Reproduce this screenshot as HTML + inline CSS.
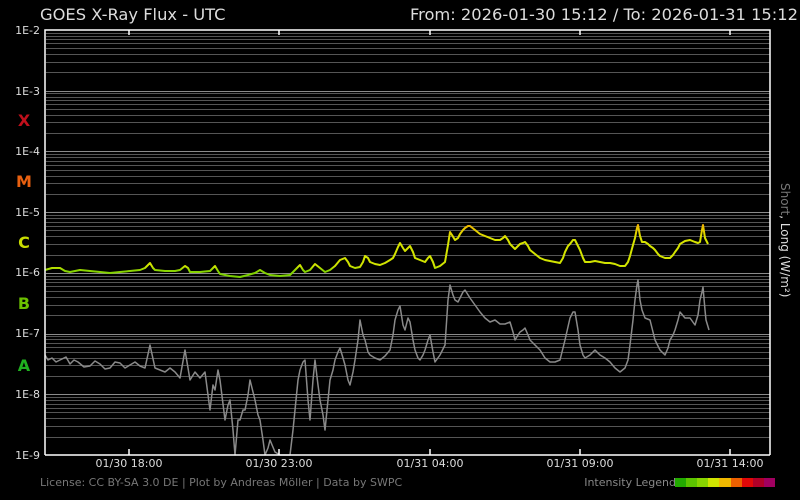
<!DOCTYPE html>
<html><head><meta charset="utf-8"><style>
html,body{margin:0;padding:0;background:#000;}
svg{display:block;font-family:"DejaVu Sans","Liberation Sans",sans-serif;}
</style></head><body>
<svg width="800" height="500" viewBox="0 0 800 500" xmlns="http://www.w3.org/2000/svg">
<rect width="800" height="500" fill="#000"/>
<defs>
<linearGradient id="lg" gradientUnits="userSpaceOnUse" x1="0" y1="222" x2="0" y2="280">
<stop offset="0" stop-color="#f0a000"/>
<stop offset="0.12" stop-color="#e8c800"/>
<stop offset="0.3" stop-color="#d8e400"/>
<stop offset="0.76" stop-color="#d0e400"/>
<stop offset="0.84" stop-color="#88d400"/>
<stop offset="1" stop-color="#70cc00"/>
</linearGradient>
</defs>
<path stroke="#555" stroke-width="1" fill="none" d="M46 33.5H770M46 36.5H770M46 39.5H770M46 43.5H770M46 48.5H770M46 54.5H770M46 62.5H770M46 72.5H770
M46 93.5H770M46 97.5H770M46 100.5H770M46 104.5H770M46 109.5H770M46 115.5H770M46 122.5H770M46 133.5H770
M46 154.5H770M46 157.5H770M46 161.5H770M46 165.5H770M46 170.5H770M46 176.5H770M46 183.5H770M46 194.5H770
M46 215.5H770M46 218.5H770M46 222.5H770M46 226.5H770M46 230.5H770M46 236.5H770M46 244.5H770M46 255.5H770
M46 276.5H770M46 279.5H770M46 282.5H770M46 286.5H770M46 291.5H770M46 297.5H770M46 305.5H770M46 315.5H770
M46 336.5H770M46 339.5H770M46 343.5H770M46 347.5H770M46 352.5H770M46 358.5H770M46 365.5H770M46 376.5H770
M46 397.5H770M46 400.5H770M46 404.5H770M46 408.5H770M46 412.5H770M46 418.5H770M46 426.5H770M46 437.5H770"/>
<path stroke="#8a8a8a" stroke-width="1" fill="none" d="M46 91.5H770M46 151.5H770M46 212.5H770M46 273.5H770M46 334.5H770M46 394.5H770"/>
<text x="40" y="20" fill="#ddd" font-size="16.3">GOES X-Ray Flux - UTC</text>
<text x="798" y="20" fill="#ddd" font-size="16.3" text-anchor="end">From: 2026-01-30 15:12  /  To: 2026-01-31 15:12</text>
<g fill="#ddd" font-size="11" text-anchor="end">
<text x="40" y="34">1E-2</text><text x="40" y="95">1E-3</text><text x="40" y="155">1E-4</text><text x="40" y="216">1E-5</text><text x="40" y="276">1E-6</text><text x="40" y="337">1E-7</text><text x="40" y="398">1E-8</text><text x="40" y="459">1E-9</text>
</g>
<g font-size="16" font-weight="bold" text-anchor="middle">
<text x="24" y="126" fill="#c0101c">X</text>
<text x="24" y="187" fill="#e86010">M</text>
<text x="24" y="248" fill="#c8dc00">C</text>
<text x="24" y="309" fill="#6cc000">B</text>
<text x="24" y="371" fill="#20b020">A</text>
</g>
<g fill="#ddd" font-size="11" text-anchor="middle">
<text x="129" y="467">01/30 18:00</text><text x="279" y="467">01/30 23:00</text><text x="430" y="467">01/31 04:00</text><text x="580" y="467">01/31 09:00</text><text x="730" y="467">01/31 14:00</text>
</g>
<text transform="translate(781,183) rotate(90)" font-size="12" fill="#ddd"><tspan fill="#777">Short</tspan>, Long (W/m²)</text>
<text x="40" y="486" fill="#777" font-size="11">License: CC BY-SA 3.0 DE | Plot by Andreas Möller | Data by SWPC</text>
<text x="676" y="486" fill="#888" font-size="11" text-anchor="end">Intensity Legend</text>
<g>
<rect x="675" y="478" width="12" height="9" fill="#22aa00"/>
<rect x="686" y="478" width="11" height="9" fill="#5cc400"/>
<rect x="697" y="478" width="11" height="9" fill="#88d400"/>
<rect x="708" y="478" width="11" height="9" fill="#d0e400"/>
<rect x="719" y="478" width="12" height="9" fill="#f0b800"/>
<rect x="731" y="478" width="11" height="9" fill="#ec6000"/>
<rect x="742" y="478" width="11" height="9" fill="#e00808"/>
<rect x="753" y="478" width="11" height="9" fill="#b00028"/>
<rect x="764" y="478" width="11" height="9" fill="#a00060"/>
</g>
<polyline fill="none" stroke="#8a8a8a" stroke-width="1.5" stroke-linejoin="round" points="45,355 48,360 52,358 56,362 60,360 66,357 70,364 74,360 78,362 84,367 90,366 95,361 100,364 105,369 110,368 115,362 120,363 125,368 130,365 135,362 140,366 145,368 150,345 155,368 160,370 165,372 170,368 175,372 180,378 185,350 190,380 195,372 200,378 205,372 208,395 210,410 213,385 215,390 218,370 220,380 225,420 228,405 230,400 233,430 235,455 238,420 240,420 243,410 245,410 248,395 250,380 253,392 255,400 258,415 260,420 263,440 265,455 268,448 270,440 275,452 280,455 285,455 290,455 293,430 295,410 298,380 300,370 303,362 305,360 308,400 310,420 313,380 315,360 318,385 320,400 323,415 325,430 328,400 330,380 333,370 335,360 338,352 340,348 343,358 345,365 348,380 350,385 353,372 355,360 358,340 360,320 363,335 365,340 368,352 370,355 375,358 380,360 385,356 390,350 393,335 395,320 398,310 400,306 403,325 405,330 408,318 410,322 413,340 415,350 418,358 420,360 423,355 425,350 428,340 430,335 433,352 435,362 440,355 445,345 448,300 450,285 453,295 455,300 458,302 460,298 463,292 465,290 470,298 475,305 480,312 485,318 490,322 495,320 500,324 505,324 510,322 513,332 515,340 518,335 520,332 523,330 525,328 528,335 530,340 535,345 540,350 545,358 550,362 555,362 560,360 565,340 570,318 573,312 575,312 578,330 580,345 583,355 585,358 590,355 595,350 600,355 605,358 610,362 615,368 620,372 625,368 628,360 630,345 633,320 635,300 637,285 638,280 640,300 642,310 645,318 650,320 653,332 655,340 660,350 665,355 668,348 670,340 673,335 675,330 678,320 680,312 685,318 690,318 695,325 698,315 700,300 702,292 703,287 705,310 706,320 709,330"/>
<polyline fill="none" stroke="url(#lg)" stroke-width="2" stroke-linejoin="round" points="45,270 52,268 60,268 65,271 70,272 80,270 90,271 100,272 110,273 120,272 130,271 140,270 145,268 148,265 150,263 153,268 155,270 165,271 175,271 180,270 185,266 188,268 190,272 200,272 210,271 213,268 215,266 218,271 220,274 230,276 240,277 248,275 255,273 260,270 265,273 270,275 280,276 290,275 293,272 295,270 298,267 300,265 303,270 305,272 310,270 315,264 320,268 325,272 330,270 335,266 340,260 345,258 348,262 350,266 355,268 360,267 363,262 365,256 368,258 370,262 375,264 380,265 385,263 390,260 393,258 395,254 398,247 400,243 403,248 405,251 408,248 410,246 413,252 415,258 420,260 425,262 428,258 430,256 433,262 435,268 440,266 445,262 448,245 450,232 452,235 455,240 458,238 460,234 463,230 465,228 468,226 470,226 475,230 480,234 485,236 490,238 495,240 500,240 503,238 505,236 508,240 510,244 513,247 515,249 518,246 520,244 523,243 525,242 528,246 530,250 535,254 540,258 545,260 550,261 555,262 560,263 563,258 565,252 568,246 570,244 573,240 575,240 578,246 580,250 583,258 585,262 590,262 595,261 600,262 605,263 610,263 615,264 620,266 625,266 628,262 630,256 633,245 635,238 637,228 638,225 640,236 642,242 645,242 648,244 650,246 653,248 655,250 658,254 660,256 665,258 670,258 673,255 675,252 678,248 680,244 685,241 690,240 695,242 698,243 700,242 702,230 703,225 705,238 706,240 708,244"/>
<g stroke="#fff" stroke-width="1.5" fill="none">
<polyline points="45,455 45,30 770,30 770,455"/>
<line x1="45" y1="455" x2="770" y2="455"/>
<line x1="129" y1="455" x2="129" y2="449"/><line x1="279" y1="455" x2="279" y2="449"/><line x1="430" y1="455" x2="430" y2="449"/><line x1="580" y1="455" x2="580" y2="449"/><line x1="730" y1="455" x2="730" y2="449"/>
<line x1="129" y1="30" x2="129" y2="35"/><line x1="279" y1="30" x2="279" y2="35"/><line x1="430" y1="30" x2="430" y2="35"/><line x1="580" y1="30" x2="580" y2="35"/><line x1="730" y1="30" x2="730" y2="35"/>
</g>
</svg>
</body></html>
